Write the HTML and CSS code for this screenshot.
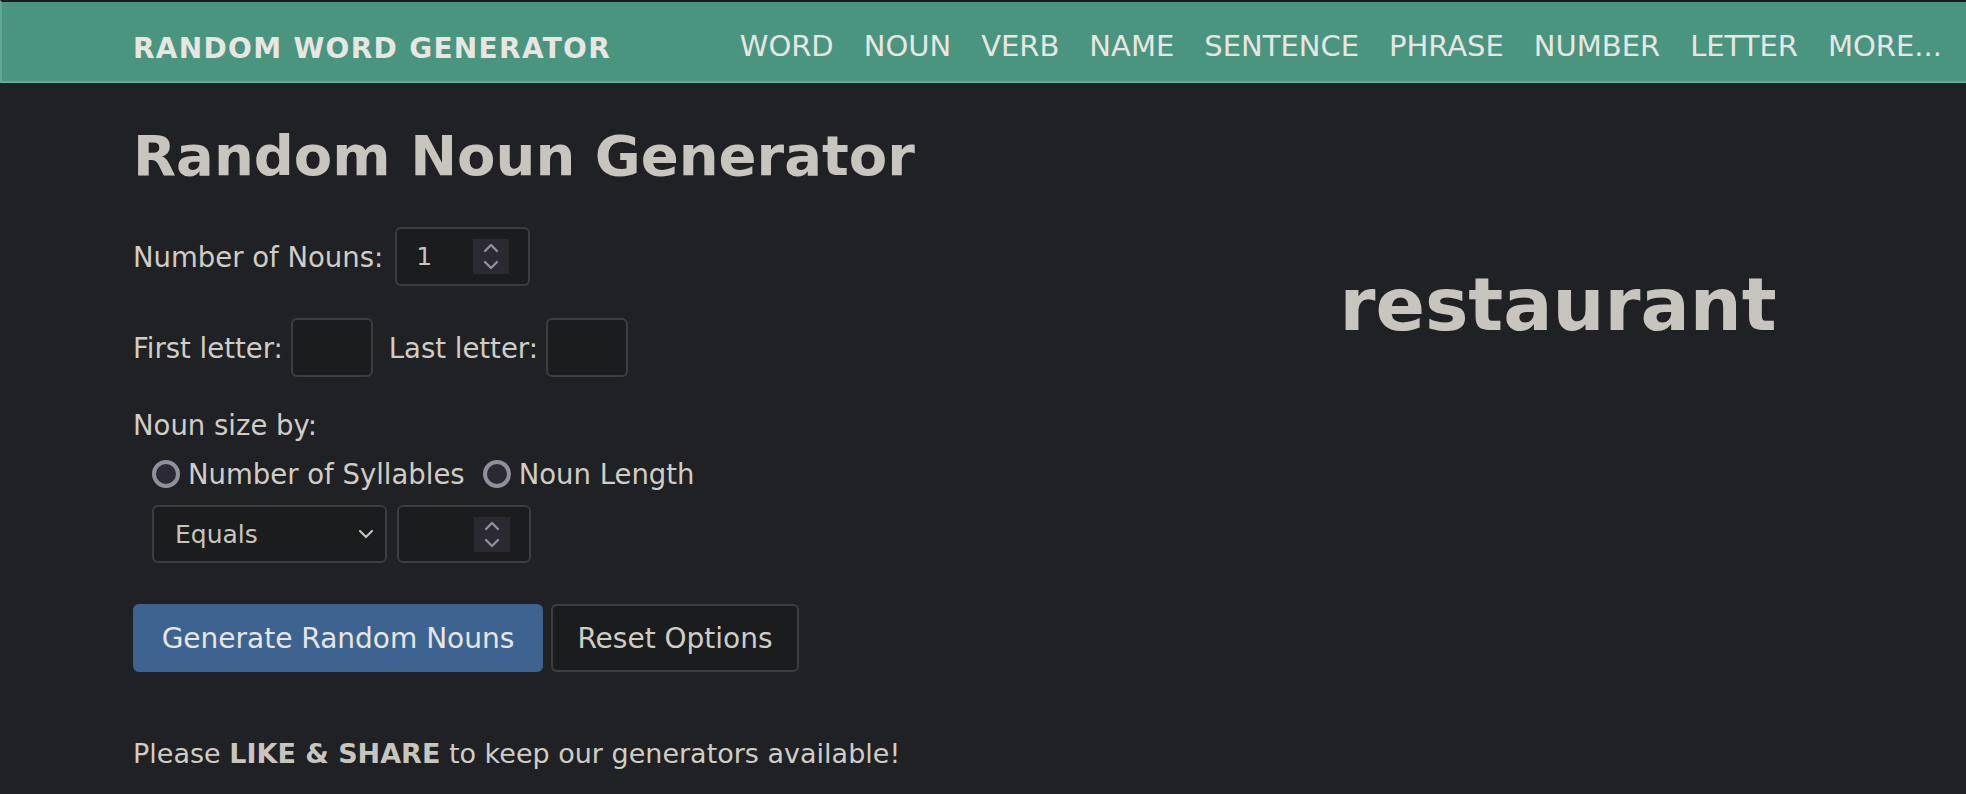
FILE: index.html
```html
<!DOCTYPE html>
<html lang="en">
<head>
<meta charset="utf-8">
<title>Random Noun Generator</title>
<link rel="stylesheet" href="styles.css">
</head>
<body>
<header class="topbar">
  <div class="topbar-inner">
    <a class="brand" href="#">RANDOM WORD GENERATOR</a>
    <nav class="menu">
      <a href="#">WORD</a>
      <a href="#">NOUN</a>
      <a href="#">VERB</a>
      <a href="#">NAME</a>
      <a href="#">SENTENCE</a>
      <a href="#">PHRASE</a>
      <a href="#">NUMBER</a>
      <a href="#">LETTER</a>
      <a href="#">MORE...</a>
    </nav>
  </div>
</header>
<main class="page">
  <section class="form-col">
    <h1 class="title">Random Noun Generator</h1>
    <div class="row row-count">
      <span class="label">Number of Nouns:</span>
      <div class="field field-num">
        <span class="value">1</span>
        <span class="spinner"><svg viewBox="0 0 36 35" width="36" height="35"><path d="M12 12 L18 6 L24 12" /><path d="M12 23 L18 29 L24 23" /></svg></span>
      </div>
    </div>
    <div class="row row-letters">
      <span class="label">First letter:</span>
      <div class="field field-letter"></div>
      <span class="label label-last">Last letter:</span>
      <div class="field field-letter"></div>
    </div>
    <div class="label size-label">Noun size by:</div>
    <div class="radios">
      <span class="radio"></span><span class="label">Number of Syllables</span>
      <span class="radio radio-2"></span><span class="label">Noun Length</span>
    </div>
    <div class="row row-size">
      <div class="field field-select">
        <span class="value">Equals</span>
        <svg class="chev" viewBox="0 0 14 8" width="14" height="8"><path d="M1 1 L7 7 L13 1" /></svg>
      </div>
      <div class="field field-num">
        <span class="value"></span>
        <span class="spinner"><svg viewBox="0 0 36 35" width="36" height="35"><path d="M12 12 L18 6 L24 12" /><path d="M12 23 L18 29 L24 23" /></svg></span>
      </div>
    </div>
    <div class="row row-buttons">
      <button class="btn btn-primary">Generate Random Nouns</button>
      <button class="btn btn-dark">Reset Options</button>
    </div>
    <p class="share">Please <strong>LIKE &amp; SHARE</strong> to keep our generators available!</p>
  </section>
  <section class="result-col">
    <div class="result">restaurant</div>
  </section>
</main>
</body>
</html>
```

FILE: styles.css
```css
* { box-sizing: border-box; }
html, body { margin: 0; padding: 0; }
body {
  background: #202124;
  color: #d0cdc6;
  font-family: "DejaVu Sans", "Liberation Sans", sans-serif;
  overflow: hidden;
  height: 794px;
}
.topbar {
  height: 83px;
  background: #4a9580;
  border-top: 2px solid #1c1d1f;
  border-bottom: 2px solid #56b595;
  border-left: 2px solid #62a592;
}
.topbar-inner {
  display: flex;
  align-items: flex-start;
  padding: 24px 0 0 131px;
}
.brand {
  color: #e8e6e3;
  text-decoration: none;
  font-weight: bold;
  font-size: 28px;
  line-height: 40px;
  letter-spacing: 1.3px;
  margin-top: 3px;
  white-space: nowrap;
}
.menu {
  display: flex;
  margin-left: auto;
  white-space: nowrap;
}
.menu a {
  color: #e8e6e3;
  text-decoration: none;
  font-size: 29px;
  line-height: 40px;
  padding: 0 15px;
}
.menu a:last-child { padding-right: 24px; }
.page {
  display: grid;
  grid-template-columns: 1150px 1fr;
}
.form-col { padding-left: 133px; }
.title {
  margin: 39px 0 0 0;
  font-size: 56px;
  line-height: 1.2;
  font-weight: bold;
  color: #c8c5be;
  white-space: nowrap;
}
.label {
  font-size: 27.5px;
  line-height: 42px;
  color: #d0cdc6;
  white-space: nowrap;
}
.row { display: flex; align-items: center; }
.row-count { margin-top: 38px; gap: 12px; }
.row-letters { margin-top: 32px; gap: 8px; }
.label-last { margin-left: 8px; }
.field {
  display: flex;
  align-items: center;
  background: #1b1c1e;
  border: 2px solid #3b3e41;
  border-radius: 6px;
  color: #c8c5be;
  font-size: 25px;
}
.field-num {
  width: 135px;
  height: 59px;
  padding: 0 19px 0 19px;
  justify-content: space-between;
}
.field-letter { width: 82px; height: 59px; }
.spinner {
  display: block;
  width: 36px;
  height: 35px;
  background: #2b2a33;
}
.spinner svg { display: block; }
.spinner path, .chev path {
  fill: none;
  stroke: #8f8f9d;
  stroke-width: 2.4;
  stroke-linecap: round;
  stroke-linejoin: round;
}
.chev path { stroke: #c8c5be; stroke-width: 2; }
.size-label { margin-top: 27px; }
.radios {
  display: flex;
  align-items: center;
  margin-top: 7px;
  padding-left: 19px;
}
.radio {
  width: 28px;
  height: 28px;
  border-radius: 50%;
  border: 4px solid #8f8f9d;
  background: #2b2a33;
  margin-right: 8px;
}
.radio-2 { margin-left: 18px; }
.row-size {
  margin-top: 10px;
  padding-left: 19px;
  gap: 10px;
}
.field-select {
  width: 235px;
  height: 58px;
  padding: 0 12px 0 21px;
  justify-content: space-between;
}
.row-size .field-num { height: 58px; width: 134px; }
.row-buttons { margin-top: 41px; gap: 8px; }
.btn {
  height: 68px;
  font-family: inherit;
  font-size: 28px;
  border-radius: 6px;
  color: #e8e6e3;
  padding: 0;
  white-space: nowrap;
  text-align: center;
  cursor: pointer;
}
.btn-primary {
  background: #3d6491;
  border: 2px solid #3d6491;
  width: 410px;
}
.btn-dark {
  background: #1b1c1e;
  border: 2px solid #3b3e41;
  width: 248px;
  color: #d0cdc6;
}
.share {
  margin: 61px 0 0 0;
  font-size: 27px;
  line-height: 42px;
  color: #d0cdc6;
  white-space: nowrap;
}
.share strong { color: #c8c5be; }
.result-col {
  text-align: center;
  padding-top: 178px;
}
.result {
  font-size: 73px;
  line-height: 1.2;
  font-weight: bold;
  color: #c8c5be;
}
```
